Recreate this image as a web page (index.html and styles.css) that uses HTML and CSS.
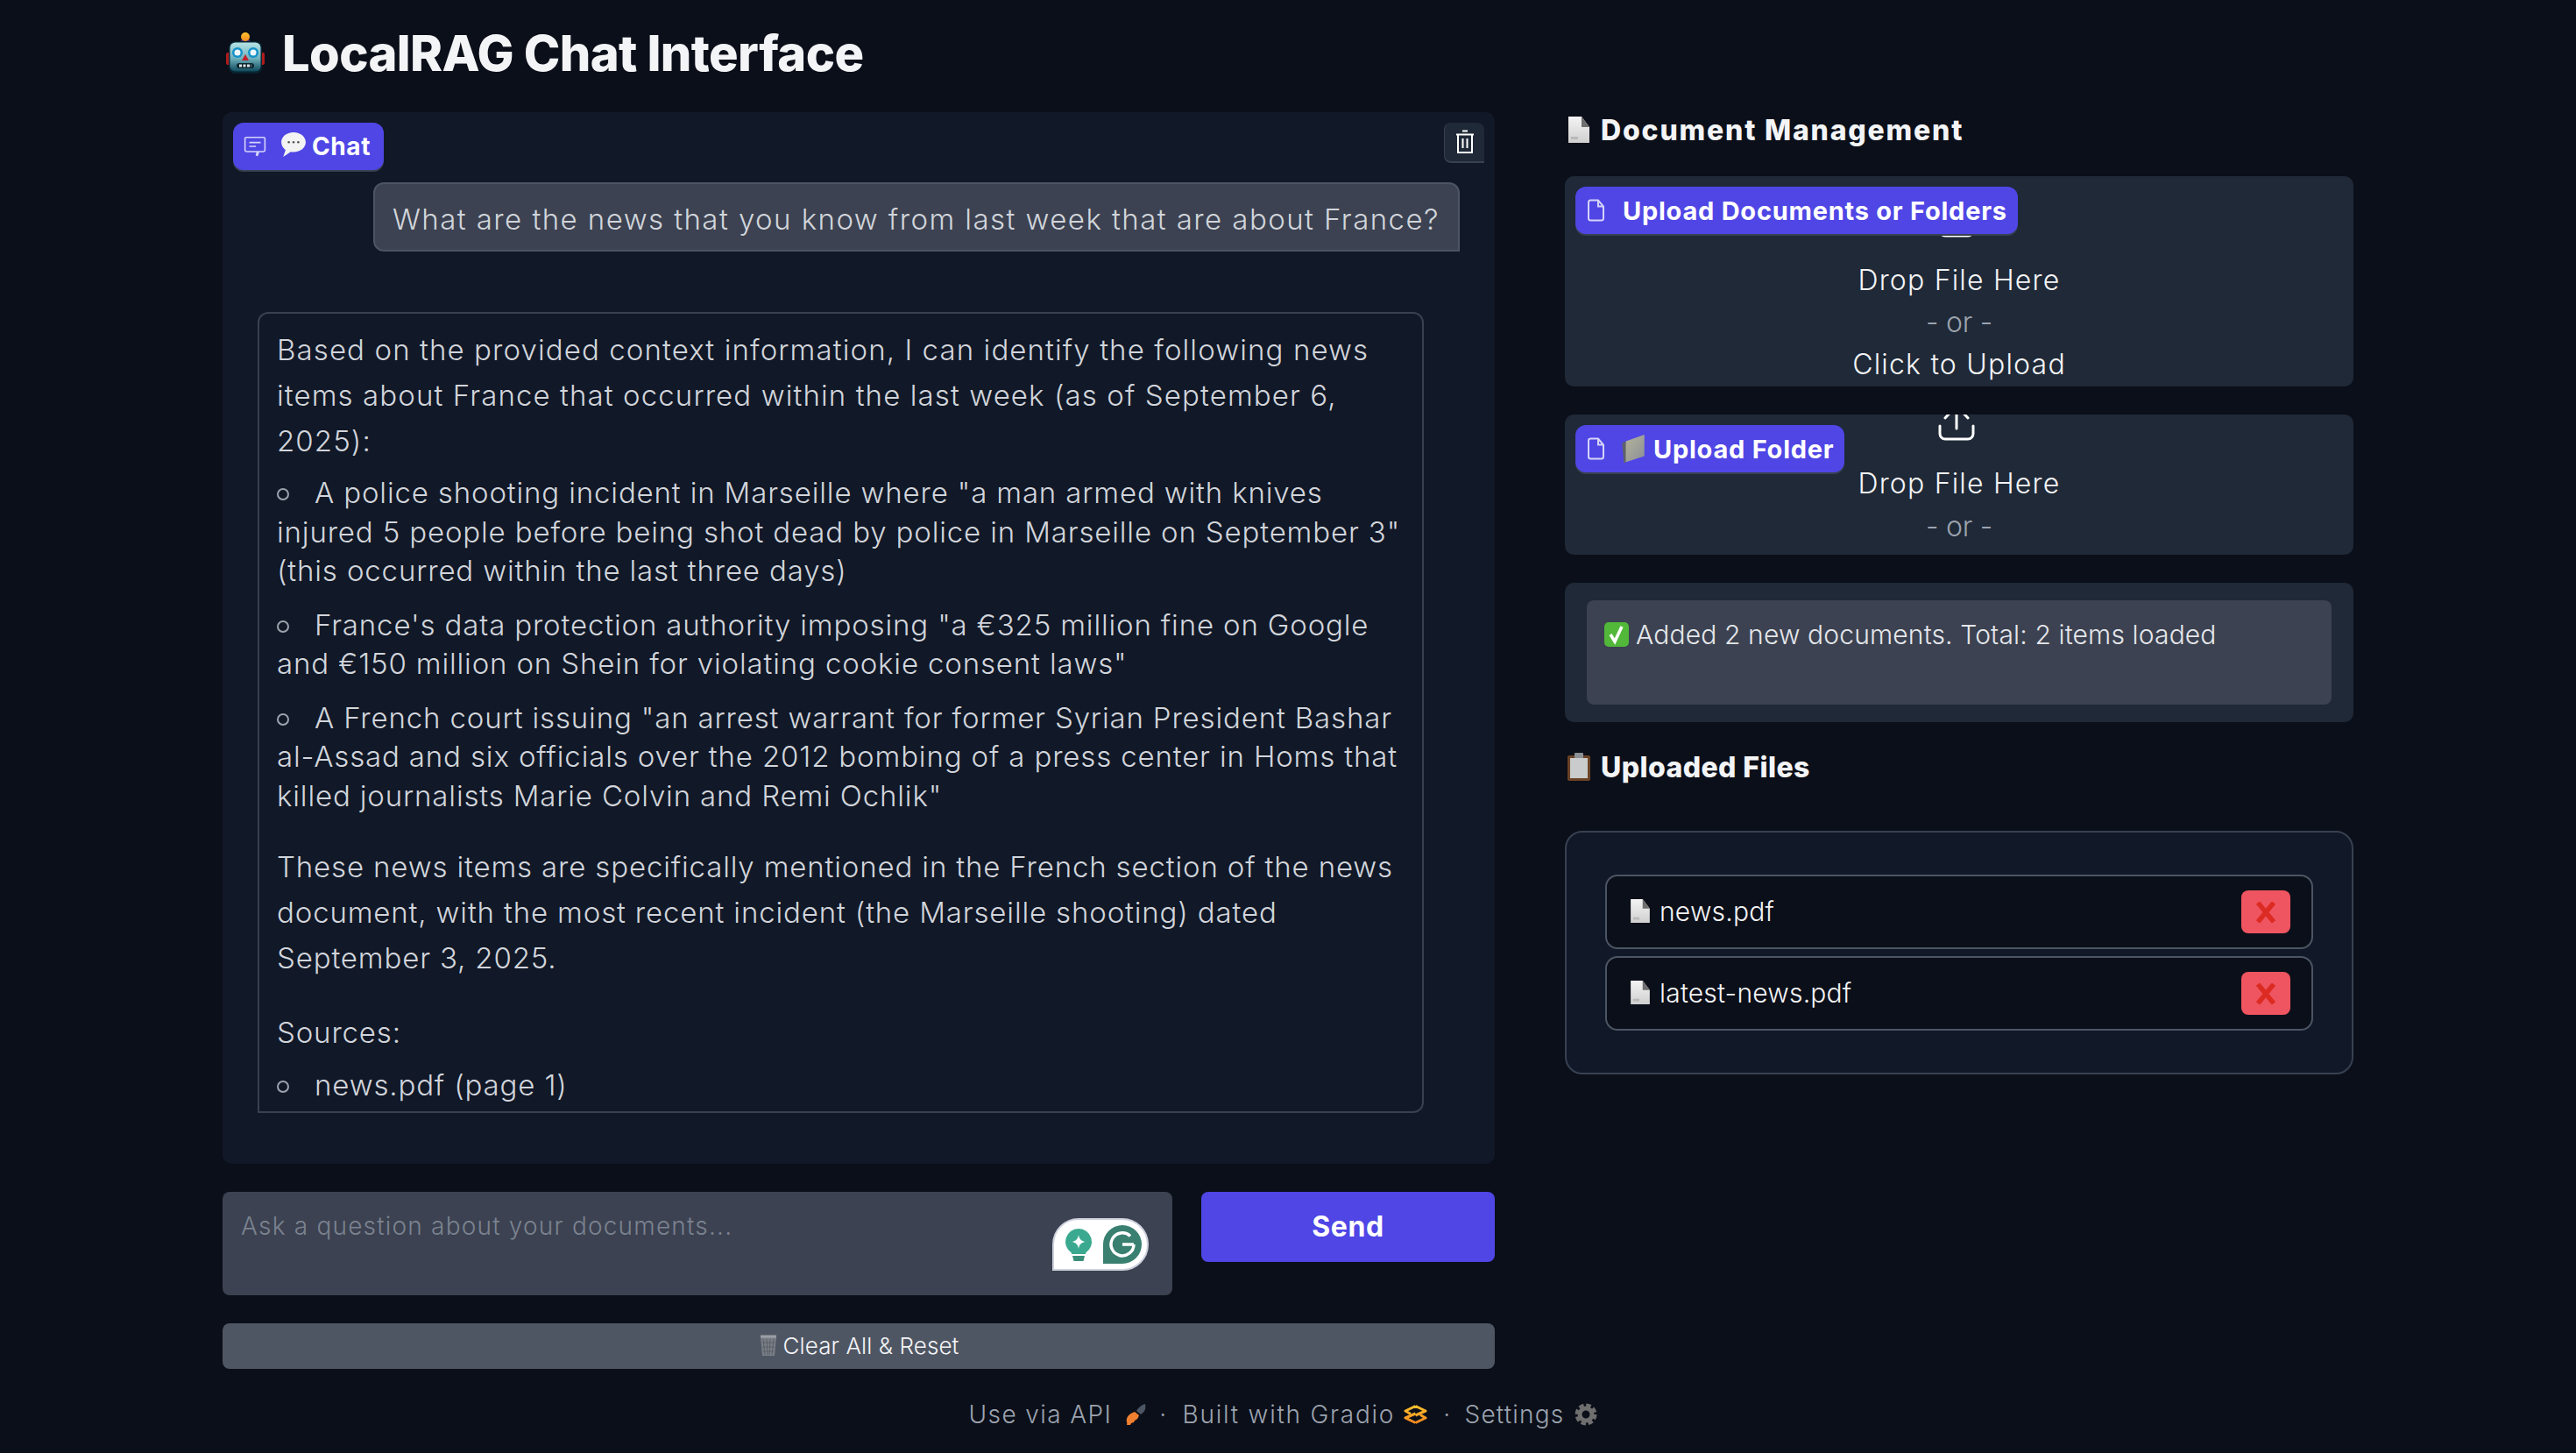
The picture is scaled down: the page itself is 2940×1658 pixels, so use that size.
FILE: index.html
```html
<!DOCTYPE html>
<html lang="en">
<head>
<meta charset="utf-8">
<title>LocalRAG Chat Interface</title>
<link rel="stylesheet" href="styles.css">
</head>
<body>
<svg class="defs" aria-hidden="true">
  <defs>
    <linearGradient id="gHead" x1="0" y1="0" x2="0" y2="1"><stop offset="0" stop-color="#b5e3e6"/><stop offset=".55" stop-color="#6fb0bb"/><stop offset="1" stop-color="#0f4a5c"/></linearGradient>
    <linearGradient id="gPage" x1="0" y1="0" x2="0" y2="1"><stop offset="0" stop-color="#f4f4f4"/><stop offset="1" stop-color="#cfcfcf"/></linearGradient>
    <linearGradient id="gFolder" x1="0" y1="0" x2="1" y2="1"><stop offset="0" stop-color="#b7b59a"/><stop offset="1" stop-color="#8b8f98"/></linearGradient>
    <linearGradient id="gOrange" x1="0" y1="0" x2="0" y2="1"><stop offset="0" stop-color="#fdc22e"/><stop offset="1" stop-color="#f58a1f"/></linearGradient>
    <symbol id="i-page" viewBox="0 0 26 32">
      <path d="M1 1h15l9 12v18H1z" fill="url(#gPage)"/>
      <path d="M16 1l9 12h-9z" fill="#6e6e6e"/>
      <path d="M4 24h8v3H4z" fill="#b9b9b9"/>
    </symbol>
    <symbol id="i-file" viewBox="0 0 20 26">
      <path d="M3 1.500h9l6 7V22a2.500 2.500 0 0 1-2.500 2.500h-12.500A2.500 2.500 0 0 1 1 22V4a2.500 2.500 0 0 1 2-2.500zM12 1.500V8.500h6" fill="none" stroke="#d6d3fa" stroke-width="2"/>
    </symbol>
    <symbol id="i-x" viewBox="0 0 24 24">
      <path d="M3 1l18 22M21 1L3 23" stroke="#dc2b22" stroke-width="5.500" fill="none"/>
    </symbol>
    <symbol id="i-upload" viewBox="0 0 42 44">
      <path d="M21 30V4M8 18L21 4l13 14" fill="none" stroke="#fff" stroke-width="3" stroke-linecap="round" stroke-linejoin="round"/>
      <path d="M2 27v9a6 6 0 0 0 6 6h26a6 6 0 0 0 6-6v-9" fill="none" stroke="#fff" stroke-width="3" stroke-linecap="round"/>
    </symbol>
  </defs>
</svg>

<div class="app">
  <header class="title">
    <svg class="robot" viewBox="0 0 44 48" aria-hidden="true">
      <rect x="0" y="24" width="5" height="14" rx="2" fill="#b01c1c"/>
      <rect x="39" y="24" width="5" height="14" rx="2" fill="#b01c1c"/>
      <path d="M16 13a6 5 0 0 1 12 0z" fill="#4a2d86"/>
      <circle cx="22" cy="6" r="5" fill="url(#gOrange)"/>
      <rect x="3" y="11" width="38" height="37" rx="7" fill="#082430"/>
      <rect x="4.500" y="12.500" width="35" height="33" rx="6" fill="url(#gHead)"/>
      <circle cx="13" cy="24" r="6" fill="#1491c9"/><circle cx="13" cy="24" r="3.500" fill="#eef7fa"/>
      <circle cx="31" cy="24" r="6" fill="#1491c9"/><circle cx="31" cy="24" r="3.500" fill="#eef7fa"/>
      <path d="M22 26l4 7h-8z" fill="#c21f2b"/>
      <rect x="12" y="36" width="20" height="6" rx="3" fill="#0c2730"/>
      <path d="M15 39h14" stroke="#dfe6e8" stroke-width="3" stroke-dasharray="3 1.500"/>
    </svg>
    <h1>LocalRAG Chat Interface</h1>
  </header>

  <main class="cols">
    <section class="left">
      <div class="chat">
        <div class="tag tag-chat">
          <svg class="tag-outline" viewBox="0 0 24 24" aria-hidden="true"><path d="M3 2.500h18a1.500 1.500 0 0 1 1.500 1.500v12a1.500 1.500 0 0 1-1.500 1.500h-5l-1.500 4-1-.5 1-3.500H3a1.500 1.500 0 0 1-1.500-1.500V4A1.500 1.500 0 0 1 3 2.500zM6 8h12M6 12h7" fill="none" stroke="#d6d3fa" stroke-width="1.500"/></svg>
          <svg class="balloon" viewBox="0 0 28 28" aria-hidden="true"><path d="M14 1c7.500 0 13 4.800 13 10.500S21.500 22 14 22c-1 0-2 0-3-.2L3 27l2.500-7.200C2.800 17.800 1 14.800 1 11.500 1 5.800 6.500 1 14 1z" fill="#f3f3f3"/><circle cx="9" cy="11.500" r="1.200" fill="#555"/><circle cx="14" cy="11.500" r="1.200" fill="#555"/><circle cx="19" cy="11.500" r="1.200" fill="#555"/></svg>
          <span>Chat</span>
        </div>
        <button class="trash" aria-label="Clear">
          <svg viewBox="0 0 22 28" aria-hidden="true"><path d="M8 1.500h6M1 5.500h20M3 5.500v20.500h16V5.500M8.500 10v11M13.500 10v11" fill="none" stroke="#fff" stroke-width="2"/></svg>
        </button>
        <div class="msg-user">What are the news that you know from last week that are about France?</div>
        <div class="msg-bot">
          <p class="para para-first">Based on the provided context information, I can identify the following news<br>items about France that occurred within the last week (as of September 6,<br>2025):</p>
          <ul class="list list-first">
            <li>A police shooting incident in Marseille where "a man armed with knives<br>injured 5 people before being shot dead by police in Marseille on September 3"<br>(this occurred within the last three days)</li>
            <li>France's data protection authority imposing "a €325 million fine on Google<br>and €150 million on Shein for violating cookie consent laws"</li>
            <li>A French court issuing "an arrest warrant for former Syrian President Bashar<br>al-Assad and six officials over the 2012 bombing of a press center in Homs that<br>killed journalists Marie Colvin and Remi Ochlik"</li>
          </ul>
          <p class="para para-mid">These news items are specifically mentioned in the French section of the news<br>document, with the most recent incident (the Marseille shooting) dated<br>September 3, 2025.</p>
          <p class="para para-mid">Sources:</p>
          <ul class="list list-last"><li>news.pdf (page 1)</li></ul>
        </div>
      </div>

      <div class="ask-row">
        <div class="ask">
          <span class="placeholder">Ask a question about your documents...</span>
          <div class="grammarly" aria-hidden="true">
            <svg viewBox="0 0 106 56">
              <path d="M28 10a15 15 0 0 1 8 27.700V39H20v-1.300A15 15 0 0 1 28 10z" fill="#3aa98f"/>
              <path d="M21 41h14l-1.500 6h-11z" fill="#3a8f7a"/>
              <path d="M28 17c.8 5 3 7.200 8 8-5 .8-7.200 3-8 8-.8-5-3-7.200-8-8 5-.8 7.200-3 8-8z" fill="#fff"/>
              <path d="M78 6a22 22 0 0 1 0 44H56V28A22 22 0 0 1 78 6z" fill="#3a8070"/>
              <path d="M91 28H78M91 28a13 13 0 1 1-4-9.500" fill="none" stroke="#fff" stroke-width="3.500"/>
            </svg>
          </div>
        </div>
        <button class="send">Send</button>
      </div>

      <button class="clear">
        <svg class="bin" viewBox="0 0 20 26" aria-hidden="true"><path d="M1 3h18l-2 22H3z" fill="#7a7f87"/><path d="M1 1.500h18v3H1z" fill="#9a9ea5"/><path d="M4 6l2 18M8 6l1 18M12 6l-1 18M16 6l-2 18M3 10h14M3 15h14M4 20h12" stroke="#5b6069" stroke-width="1"/></svg>
        <span>Clear All &amp; Reset</span>
      </button>
    </section>

    <aside class="right">
      <h2 class="heading heading-doc"><svg class="heading-icon" aria-hidden="true"><use href="#i-page"/></svg><span>Document Management</span></h2>

      <div class="drop drop-a">
        <div class="tag tag-upload"><svg class="tag-file" aria-hidden="true"><use href="#i-file"/></svg><span>Upload Documents or Folders</span></div>
        <svg class="upload-icon" aria-hidden="true"><use href="#i-upload"/></svg>
        <div class="drop-main drop-first">Drop File Here</div>
        <div class="drop-or">- or -</div>
        <div class="drop-main">Click to Upload</div>
      </div>

      <div class="drop drop-b">
        <div class="tag tag-upload"><svg class="tag-file" aria-hidden="true"><use href="#i-file"/></svg><svg class="folder" viewBox="0 0 26 32" aria-hidden="true"><path d="M5 8l20-7v23L3 31z" fill="url(#gFolder)"/><path d="M1 10l4-2v23l-2 0z" fill="#5d6168"/></svg><span>Upload Folder</span></div>
        <svg class="upload-icon" aria-hidden="true"><use href="#i-upload"/></svg>
        <div class="drop-main drop-first">Drop File Here</div>
        <div class="drop-or">- or -</div>
      </div>

      <div class="status">
        <div class="status-inner">
          <svg class="check" viewBox="0 0 28 28" aria-hidden="true"><rect width="28" height="28" rx="5" fill="#52b83a"/><path d="M7 14l5 8 8-17" fill="none" stroke="#fff" stroke-width="3.500"/></svg>
          <span>Added 2 new documents. Total: 2 items loaded</span>
        </div>
      </div>

      <h2 class="heading heading-files">
        <svg class="heading-icon" viewBox="0 0 26 32" aria-hidden="true"><rect x="0" y="3" width="26" height="29" rx="2" fill="#6b4226"/><rect x="3" y="6" width="20" height="23" fill="#c9cbcc"/><rect x="8" y="0" width="10" height="6" rx="1" fill="#8b9196"/></svg>
        <span>Uploaded Files</span>
      </h2>

      <div class="files">
        <div class="file-row">
          <svg class="file-icon" aria-hidden="true"><use href="#i-page"/></svg>
          <span class="file-name">news.pdf</span>
          <button class="del" aria-label="Delete news.pdf"><svg aria-hidden="true"><use href="#i-x"/></svg></button>
        </div>
        <div class="file-row">
          <svg class="file-icon" aria-hidden="true"><use href="#i-page"/></svg>
          <span class="file-name">latest-news.pdf</span>
          <button class="del" aria-label="Delete latest-news.pdf"><svg aria-hidden="true"><use href="#i-x"/></svg></button>
        </div>
      </div>
    </aside>
  </main>

  <footer class="foot">
    <span>Use via API</span>
    <svg class="foot-rocket" viewBox="0 0 24 24" aria-hidden="true"><path d="M23 0c1 5 0 9-5 12l-5-4c2-4 6-7 10-8z" fill="#4b5563"/><path d="M11 9l5 4c-1 3-2 5-5 6l-1 2-3 1-1 2H2c1-3-1-4 0-7 1-4 4-6 9-8z" fill="#f08030"/></svg>
    <span class="dot">·</span>
    <span class="foot-built">Built with Gradio</span>
    <svg class="foot-gradio" viewBox="0 0 27 22" aria-hidden="true"><path d="M13.500 1.500L25 7l-11.500 5M13.500 1.500L2 7l6 3.500M13.500 20.500L2 15l11.500-5M13.500 20.500L25 15l-6-3.500" fill="none" stroke="url(#gOrange)" stroke-width="3" stroke-linejoin="round"/></svg>
    <span class="dot dot-b">·</span>
    <span class="foot-settings">Settings</span>
    <svg class="foot-gear" viewBox="0 0 26 26" aria-hidden="true"><circle cx="13" cy="13" r="10" fill="none" stroke="#6f6f6f" stroke-width="5" stroke-dasharray="5.200 2.650"/><circle cx="13" cy="13" r="7" fill="none" stroke="#6f6f6f" stroke-width="5"/></svg>
  </footer>
</div>
</body>
</html>
```
FILE: styles.css
```css
* { box-sizing: border-box; }
html, body { margin: 0; padding: 0; background: #0b0f19; }
body { font-family: Inter, "Open Sans", sans-serif; color: #d1d5db; }
button { font-family: inherit; border: 0; padding: 0; margin: 0; cursor: pointer; }
.defs { display: block; width: 0; height: 0; }

.app { width: 2432px; margin: 0 auto; }

.title { height: 122px; margin-bottom: 6px; display: flex; align-items: center; gap: 20px; padding-left: 4px; }
.robot { width: 44px; height: 48px; margin-top: -2px; flex: none; }
.title h1 { margin: 0; font-size: 56px; line-height: 64px; font-weight: 800; letter-spacing: -0.6px; color: #f3f4f6; white-space: nowrap; }

.cols { display: grid; grid-template-columns: 1452px 900px; column-gap: 80px; align-items: start; }
.left { display: flex; flex-direction: column; gap: 32px; }

.chat { position: relative; height: 1200px; background: #111827; border-radius: 10px; padding: 80px 40px 0; display: flex; flex-direction: column; }
.tag { position: absolute; display: flex; align-items: center; background: #4f46e5; color: #fff; font-weight: 700; border-radius: 12px; box-shadow: 0 2px 0 #374151; white-space: nowrap; }
.tag-chat { left: 12px; top: 12px; width: 172px; height: 54px; padding-left: 12px; font-size: 28px; letter-spacing: 0.6px; }
.tag-outline { width: 26px; height: 26px; margin-right: 16px; }
.balloon { width: 30px; height: 30px; margin-right: 6px; margin-top: -4px; }
.trash { position: absolute; right: 12px; top: 12px; width: 46px; height: 46px; background: #1f2937; border-radius: 8px 8px 0 8px; border-left: 1px solid #374151; border-bottom: 2px solid #374151; display: flex; align-items: center; justify-content: center; }
.trash svg { width: 22px; height: 28px; }

.msg-user { align-self: flex-end; width: 1240px; height: 79px; background: #3c4251; border: 2px solid #4b5563; border-radius: 12px 12px 0 12px; padding: 0 20px; font-size: 33px; font-weight: 300; letter-spacing: 1.44px; line-height: 80px; color: #d1d5db; white-space: nowrap; }
.msg-bot { width: 1331px; height: 914px; margin-top: 69px; border: 2px solid #374151; border-radius: 12px 12px 12px 0; padding: 15px 20px 0; font-size: 33px; font-weight: 300; letter-spacing: 0.85px; color: #d1d5db; white-space: nowrap; }
.para { margin: 0; line-height: 52px; }
.para-first { letter-spacing: 1.1px; }
.para-mid { margin-top: 33px; }
.list { list-style: none; margin: 0; padding: 0; line-height: 44.500px; }
.list-first { margin-top: 11px; }
.list-last { margin-top: 12px; }
.list li + li { margin-top: 17px; }
.list li::before { content: ""; display: inline-block; width: 10px; height: 10px; margin-right: 29px; border: 2px solid #9ca3af; border-radius: 50%; vertical-align: 3px; }

.ask-row { display: flex; gap: 33px; align-items: flex-start; }
.ask { position: relative; width: 1084px; height: 118px; background: #3c4251; border-radius: 8px; padding: 20px 21px; font-size: 28px; font-weight: 300; letter-spacing: 1.2px; line-height: 38px; color: #7b8290; }
.grammarly { position: absolute; left: 947px; top: 30px; width: 110px; height: 60px; background: #fff; border: 2px solid #cfd2de; border-radius: 30px 30px 30px 0; overflow: hidden; }
.grammarly svg { display: block; width: 106px; height: 56px; }
.send { width: 335px; height: 80px; padding-bottom: 2px; background: #4f46e5; color: #fff; font-size: 32px; font-weight: 700; letter-spacing: 0.6px; border-radius: 8px; }
.clear { height: 52px; padding-bottom: 2px; background: #4f5663; color: #f3f4f6; border-radius: 8px; display: flex; align-items: center; justify-content: center; gap: 6px; font-size: 26px; font-weight: 300; letter-spacing: 0.1px; }
.bin { width: 22px; height: 26px; }

.right { display: flex; flex-direction: column; }
.heading { margin: 0; height: 40px; display: flex; align-items: center; gap: 12px; padding-left: 3px; font-size: 32px; font-weight: 800; color: #f3f4f6; white-space: nowrap; }
.heading-icon { width: 26px; height: 32px; flex: none; }
.heading-doc { margin-bottom: 33px; letter-spacing: 1.8px; }
.heading-files { margin-top: 31px; margin-bottom: 53px; letter-spacing: 0.4px; }

.drop { position: relative; background: #1f2937; border-radius: 10px; overflow: hidden; display: flex; flex-direction: column; align-items: center; color: #f3f4f6; }
.drop-a { height: 240px; padding-top: 26px; margin-bottom: 32px; }
.drop-b { height: 160px; margin-bottom: 32px; }
.upload-icon { width: 42px; height: 44px; flex: none; margin-left: -6px; }
.drop-b .upload-icon { margin-top: -14px; }
.drop-main { font-size: 32px; font-weight: 300; letter-spacing: 1.2px; line-height: 48px; white-space: nowrap; }
.drop-first { margin-top: 25px; }
.drop-or { font-size: 32px; font-weight: 300; line-height: 50px; letter-spacing: -0.2px; color: #9ca3af; }
.drop-a .drop-or { line-height: 48px; }
.tag-upload { left: 12px; top: 12px; height: 54px; padding: 0 12px 0 14px; font-size: 29px; letter-spacing: 0.75px; gap: 10px; }
.tag-file { width: 20px; height: 26px; margin-right: 10px; }
.folder { width: 28px; height: 34px; margin-right: -1px; margin-left: -2px; }

.status { height: 159px; background: #1f2937; border-radius: 10px; padding: 20px 25px; margin-bottom: 0; }
.status-inner { height: 119px; background: #3c4251; border-radius: 8px; padding: 20px; display: flex; align-items: flex-start; gap: 8px; font-size: 30px; font-weight: 300; letter-spacing: 0.15px; line-height: 38px; color: #e5e7eb; white-space: nowrap; }
.check { width: 28px; height: 28px; margin-top: 5px; flex: none; }

.files { height: 278px; background: #111827; border: 2px solid #374151; border-radius: 20px; padding: 48px 44px; display: flex; flex-direction: column; gap: 8px; }
.file-row { height: 85px; background: #0b0f19; border: 2px solid #4b5563; border-radius: 14px; padding: 0 24px 0 26px; display: flex; align-items: center; gap: 10px; }
.file-icon { width: 24px; height: 29px; flex: none; margin-top: -2px; }
.file-name { flex: 1; padding-bottom: 2px; font-size: 30px; font-weight: 300; letter-spacing: 0.2px; color: #f3f4f6; white-space: nowrap; }
.del { width: 56px; height: 49px; background: #ef5560; border-radius: 8px; display: flex; align-items: center; justify-content: center; }
.del svg { width: 24px; height: 24px; }

.foot { margin-top: 32px; padding-right: 11px; height: 40px; display: flex; align-items: center; justify-content: center; font-size: 28px; font-weight: 300; letter-spacing: 1.4px; color: #9ca3af; white-space: nowrap; }
.foot-rocket { width: 24px; height: 24px; margin: 0 15px 0 15px; }
.dot { margin-right: 17px; }
.dot-b { margin-left: 18px; margin-right: 15px; }
.foot-built { letter-spacing: 1.75px; }
.foot-settings { letter-spacing: 1.2px; }
.foot-gradio { width: 27px; height: 22px; margin-left: 10px; }
.foot-gear { width: 26px; height: 26px; margin-left: 12px; }
```
